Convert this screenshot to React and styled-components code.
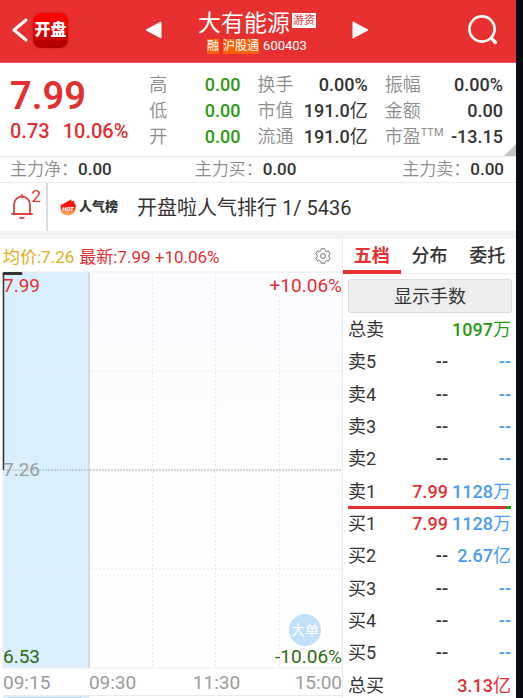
import React from "react";
import styled, { createGlobalStyle } from "styled-components";

const color = {
  brand: "#e93030",
  red: "#e22f31",
  green: "#2b9a12",
  deepGreen: "#2f6b12",
  blue: "#4a9cf5",
  gold: "#e0b020",
  ink: "#333333",
  muted: "#8c8c8c",
  axis: "#9b9b9b",
  line: "#ececec",
};

const GlobalStyle = createGlobalStyle`
  *, *::before, *::after { box-sizing: border-box; }
  html, body { margin: 0; height: 100%; }
  body {
    background: #070b13;
    color: ${color.ink};
    font-family: Roboto, "Noto Sans CJK SC", sans-serif;
    overflow: hidden;
  }
  button { font: inherit; color: inherit; border: 0; padding: 0; background: none; cursor: pointer; }
  a { color: inherit; text-decoration: none; }
  svg { display: block; }
  dl, dt, dd, h1, p { margin: 0; font-weight: inherit; }
`;

const Screen = styled.div`
  height: 100vh;
  margin-right: 7px;
  overflow: hidden;
  background: #fff;
`;

/* ---------- header ---------- */

const Header = styled.header`
  display: grid;
  grid-template-columns: 1fr 224px 1fr;
  align-items: center;
  height: 63px;
  padding: 0 14px 2px 12px;
  background: ${color.brand};
  border-bottom: 1px solid #ee5555;
  color: #fff;
`;

const HeaderSide = styled.div`
  display: flex;
  align-items: center;
  gap: 4px;
  justify-content: ${(p) => (p.$end ? "flex-end" : "flex-start")};
`;

const AppLogo = styled.a`
  display: grid;
  place-items: center;
  width: 35px;
  height: 35px;
  border-radius: 8px;
  background: linear-gradient(#ff0500 0%, #f00000 45%, #b40000 85%);
  box-shadow: 0 0 3px rgba(120, 0, 0, 0.4);
  font-size: 16px;
  line-height: 20px;
  font-weight: 900;
  white-space: nowrap;
`;

const StockNav = styled.nav`
  display: flex;
  align-items: center;
  justify-content: space-between;
`;

const StockTitle = styled.div`
  display: flex;
  flex-direction: column;
  align-items: center;
  padding-top: 4px;
`;

const TitleLine = styled.div`
  display: flex;
  align-items: flex-start;
  gap: 2px;
`;

const StockName = styled.h1`
  font-size: 23px;
  line-height: 28px;
  font-weight: 400;
`;

const StyleTag = styled.span`
  margin-top: 3px;
  padding: 0 1px;
  background: #fff;
  color: ${color.brand};
  font-size: 11px;
  line-height: 15px;
`;

const CodeLine = styled.div`
  display: flex;
  align-items: center;
  gap: 4px;
  font-size: 13px;
  line-height: 16px;
`;

const MarketTag = styled.span`
  background: #fb6306;
  font-size: 12px;
  line-height: 15px;
`;

/* ---------- quote ---------- */

const Quote = styled.section`
  position: relative;
  display: grid;
  grid-template-columns: 122fr 91fr 110fr 118fr;
  column-gap: 17px;
  padding: 9px 13px 6px 10px;
  border-bottom: 1px solid ${color.line};
`;

const PriceBlock = styled.div`
  display: flex;
  flex-direction: column;
  color: ${color.red};
  font-weight: 600;
  white-space: nowrap;
`;

const Price = styled.p`
  padding-top: 3px;
  font-size: 38px;
  line-height: 43px;
`;

const Change = styled.p`
  display: flex;
  gap: 13px;
  font-size: 20px;
  line-height: 26px;
  font-weight: 500;
`;

const Metrics = styled.dl`
  display: flex;
  flex-direction: column;
`;

const Metric = styled.div`
  display: flex;
  justify-content: space-between;
  line-height: 26px;
  white-space: nowrap;
`;

const MetricName = styled.dt`
  display: flex;
  color: ${color.muted};
  font-size: 18px;
  font-weight: 350;
`;

const Suffix = styled.span`
  font-size: 11px;
  line-height: 18px;
  font-weight: 400;
`;

const MetricValue = styled.dd`
  color: ${(p) => (p.$tone ? color[p.$tone] : color.ink)};
  font-size: 18px;
  font-weight: 500;
`;

const Han = styled.span`
  font-weight: 400;
`;

const Corner = styled.svg`
  position: absolute;
  right: 0;
  bottom: 0;
`;

const FlowBar = styled.dl`
  display: grid;
  grid-template-columns: 185fr 208fr auto;
  padding: 0 12px 0 10px;
  border-bottom: 1px solid ${color.line};
`;

const Flow = styled.div`
  display: flex;
  line-height: 25px;
  font-size: 17px;
  white-space: nowrap;
`;

const FlowName = styled.dt`
  color: ${color.muted};
  font-weight: 350;
`;

const FlowValue = styled.dd`
  font-weight: 500;
`;

/* ---------- popularity rank ---------- */

const RankBar = styled.section`
  display: flex;
  align-items: stretch;
  height: 48px;
`;

const AlertButton = styled.button`
  position: relative;
  width: 48px;
  padding-left: 11px;
  border-right: 2px solid #dcdcdc;
  color: ${color.red};
`;

const AlertCount = styled.span`
  position: absolute;
  top: 4px;
  right: 5px;
  font-size: 17px;
  line-height: 18px;
`;

const RankLink = styled.a`
  display: flex;
  flex: 1;
  align-items: center;
  padding-left: 12px;
  font-size: 20px;
  line-height: 28px;
  font-weight: 400;
  white-space: nowrap;
`;

const RankBadge = styled.span`
  display: flex;
  align-items: center;
  gap: 3px;
  margin-right: 19px;
  font-size: 13px;
  line-height: 20px;
  font-weight: 900;
`;

const RankText = styled.span`
  padding-top: 2px;
`;

const Band = styled.div`
  height: 8px;
  background: #f2f2f2;
`;

/* ---------- market area ---------- */

const Market = styled.main`
  display: grid;
  grid-template-columns: 343fr 173fr;
`;

const ChartPanel = styled.section`
  display: flex;
  flex-direction: column;
  padding-left: 3px;
  border-right: 1px solid ${color.line};
`;

const ChartHead = styled.div`
  display: flex;
  align-items: center;
  gap: 5px;
  height: 33px;
  padding-right: 11px;
  font-size: 17px;
  white-space: nowrap;
`;

const Legend = styled.span`
  color: ${(p) => color[p.$tone]};
`;

const GearButton = styled.button`
  margin-left: auto;
`;

const Plot = styled.div`
  position: relative;
  height: 396px;
  background: linear-gradient(#fafbff, #fefefe 50%, #ffffff);
`;

const PlotSvg = styled.svg`
  width: 100%;
  height: 100%;
  overflow: visible;
`;

const AxisLabel = styled.span`
  position: absolute;
  ${(p) => (p.$right ? "right: 0;" : "left: 0;")}
  ${(p) => p.$at === "top" && "top: 3px;"}
  ${(p) => p.$at === "middle" && "top: 50%;"}
  ${(p) => p.$at === "bottom" && "bottom: 0;"}
  ${(p) => p.$at === "middle" && "transform: translateY(-50%);"}
  color: ${(p) => color[p.$tone]};
  font-size: 19px;
  line-height: 22px;
`;

const BigOrder = styled.button`
  && {
    position: absolute;
    right: 21px;
    bottom: 22px;
    width: 32px;
    height: 32px;
    border-radius: 50%;
    background: #bfe0f7;
    color: #fff;
    font-size: 14px;
    line-height: 32px;
    white-space: nowrap;
  }
`;

const TimeAxis = styled.div`
  display: grid;
  grid-template-columns: 86fr 104fr 102fr 47fr;
  height: 27px;
  color: ${color.axis};
  font-size: 19px;
  line-height: 29px;
`;

const VolumePlot = styled.div`
  height: 7px;
  border-top: 1px solid ${color.line};
`;

/* ---------- order book ---------- */

const Book = styled.section`
  display: flex;
  flex-direction: column;
`;

const Tabs = styled.div`
  display: grid;
  grid-template-columns: repeat(3, 1fr);
  height: 35px;
  border-bottom: 1px solid ${color.line};
`;

const Tab = styled.button`
  && {
    height: 35px;
    padding-top: 2px;
    border-bottom: 4px solid ${(p) => (p.$active ? color.brand : "transparent")};
    color: ${(p) => (p.$active ? color.brand : color.ink)};
    font-size: 18px;
    line-height: 29px;
    font-weight: ${(p) => (p.$active ? 700 : 500)};
  }
`;

const LotsButton = styled.button`
  && {
    margin: 5px 4px 1px 5px;
    height: 34px;
    border: 1px solid #dcdcdc;
    border-radius: 3px;
    background: #eeeeee;
    padding-top: 1px;
    font-size: 18px;
    line-height: 31px;
  }
`;

const Ladder = styled.table`
  flex: 1;
  display: flex;
  flex-direction: column;
  padding: 0 5px;
`;

const Side = styled.tbody`
  flex: 1;
  display: flex;
  flex-direction: column;
`;

const Level = styled.tr`
  flex: 1;
  display: grid;
  grid-template-columns: 37fr 63fr 63fr;
  align-items: center;
  font-size: 18px;
  line-height: 24px;
  white-space: nowrap;
`;

const LevelName = styled.th`
  padding: 0;
  font-weight: 400;
  text-align: left;
`;

const LevelCell = styled.td`
  padding: 0;
  color: ${(p) => color[p.$tone]};
  font-weight: 500;
  text-align: right;
`;

const Balance = styled.tbody`
  display: block;
  height: 3px;
  margin: -2px 0 -1px;
  background: linear-gradient(to right, ${color.red} 97%, ${color.green} 97%);
`;

/* ---------- data ---------- */

const metricColumns = [
  [
    { name: "高", value: "0.00", tone: "green" },
    { name: "低", value: "0.00", tone: "green" },
    { name: "开", value: "0.00", tone: "green" },
  ],
  [
    { name: "换手", value: "0.00%" },
    { name: "市值", value: "191.0", unit: "亿" },
    { name: "流通", value: "191.0", unit: "亿" },
  ],
  [
    { name: "振幅", value: "0.00%" },
    { name: "金额", value: "0.00" },
    { name: "市盈", suffix: "TTM", value: "-13.15" },
  ],
];

const flows = [
  ["主力净：", "0.00"],
  ["主力买：", "0.00"],
  ["主力卖：", "0.00"],
];

const sells = [
  { name: "总卖", volume: "1097", unit: "万", volumeTone: "green" },
  { name: "卖5", price: "--", volume: "--" },
  { name: "卖4", price: "--", volume: "--" },
  { name: "卖3", price: "--", volume: "--" },
  { name: "卖2", price: "--", volume: "--" },
  { name: "卖1", price: "7.99", priceTone: "red", volume: "1128", unit: "万" },
];

const buys = [
  { name: "买1", price: "7.99", priceTone: "red", volume: "1128", unit: "万" },
  { name: "买2", price: "--", volume: "2.67", unit: "亿" },
  { name: "买3", price: "--", volume: "--" },
  { name: "买4", price: "--", volume: "--" },
  { name: "买5", price: "--", volume: "--" },
  { name: "总买", volume: "3.13", unit: "亿", volumeTone: "red" },
];

const times = ["09:15", "09:30", "11:30", "15:00"];

/* ---------- icons ---------- */

const BackIcon = () => (
  <svg width="17" height="24" viewBox="0 0 17 24" fill="none" stroke="#fff" strokeWidth="3" strokeLinecap="round" strokeLinejoin="round">
    <path d="M14 2 L2 12 L14 22" />
  </svg>
);

const TriangleIcon = ({ flip }) => (
  <svg width="17" height="18" viewBox="0 0 17 18" fill="#fff" stroke="#fff" strokeWidth="1" strokeLinejoin="round">
    <path d={flip ? "M16 1 V17 L1 9 Z" : "M1 1 V17 L16 9 Z"} />
  </svg>
);

const SearchIcon = () => (
  <svg width="36" height="32" viewBox="0 0 36 32" fill="none" stroke="#fff" strokeWidth="2.6" strokeLinecap="round">
    <circle cx="16" cy="15" r="12.600" />
    <path d="M25.500 24.500 L29.500 28.500" strokeWidth="3.200" />
  </svg>
);

const BellIcon = () => (
  <svg width="22" height="26" viewBox="0 0 22 26" fill="none" stroke="#e04040" strokeWidth="1.8" strokeLinejoin="round" strokeLinecap="round">
    <path d="M11 1 V3" />
    <path d="M1 20 H21" />
    <path d="M3 19.500 V11 C3 6 6.500 2.500 11 2.500 C15.500 2.500 19 6 19 11 V19.500" />
    <path d="M8.500 23.500 H13.500 L12.500 24.500 H9.500 Z" fill="#e04040" strokeWidth="0.800" />
  </svg>
);

const HotIcon = () => (
  <svg width="16" height="17" viewBox="0 0 16 17">
    <defs>
      <linearGradient id="flame" x1="0" y1="0" x2="0" y2="1">
        <stop offset="0.500" stopColor="#fb140c" />
        <stop offset="0.700" stopColor="#fb7a3c" />
        <stop offset="1" stopColor="#fdb266" />
      </linearGradient>
    </defs>
    <path fill="url(#flame)" d="M8 16.500 C3.500 16.500 0.500 13.500 0.500 9.500 C0.500 7.500 1 5.500 2.300 4.300 L2.600 6 C3.500 4 5.500 3.800 7 2.800 C8.300 2 9.800 1.500 11.500 0.300 C11.200 1.500 11.300 2 11.800 2.500 C12.600 2.200 13.200 1.600 13.500 1 C14 2.300 13.700 3.200 14.200 4.500 L15.200 4.200 C15.800 6 15.700 8 15.500 9.500 C15.300 13.500 12.500 16.500 8 16.500 Z" />
    <text x="8" y="11.500" textAnchor="middle" fontFamily="Roboto" fontWeight="900" fontStyle="italic" fontSize="6" fill="#fff">HOT</text>
  </svg>
);

const GearIcon = () => (
  <svg width="16" height="16" viewBox="0 0 16 16" fill="none" stroke="#777" strokeWidth="1" strokeLinejoin="round">
    <path d="M6.300 0.700 H9.700 L10.200 2.700 L11.600 3.500 L13.500 2.900 L15.200 5.800 L13.800 7.200 V8.800 L15.200 10.200 L13.500 13.100 L11.600 12.500 L10.200 13.300 L9.700 15.300 H6.300 L5.800 13.300 L4.400 12.500 L2.500 13.100 L0.800 10.200 L2.200 8.800 V7.200 L0.800 5.800 L2.500 2.900 L4.400 3.500 L5.800 2.700 Z" />
    <circle cx="8" cy="8" r="2.500" />
  </svg>
);

const IconButton = styled.button``;

const Intraday = () => (
  <PlotSvg aria-hidden="true">
    <rect x="0" y="0" width="25.400%" height="100%" fill="#d9effe" />
    <g stroke="#e6e8ea" strokeDasharray="2 2">
      <line x1="0" x2="100%" y1="25%" y2="25%" />
      <line x1="0" x2="100%" y1="75%" y2="75%" />
      <line x1="44.100%" x2="44.100%" y1="0" y2="100%" />
      <line x1="62.700%" x2="62.700%" y1="0" y2="100%" />
      <line x1="81.500%" x2="81.500%" y1="0" y2="100%" />
    </g>
    <line x1="0" x2="100%" y1="50%" y2="50%" stroke="#b0b0b0" strokeDasharray="2 1" />
    <line x1="25.400%" x2="25.400%" y1="0" y2="100%" stroke="#b9c3ca" />
    <rect x="0" y="0" width="100%" height="100%" fill="none" stroke="#ececec" />
    <line x1="0.500" x2="0.500" y1="1" y2="50%" stroke="#333" strokeWidth="1.500" />
    <line x1="1" x2="18" y1="1.500" y2="1.500" stroke="#333" strokeWidth="3" strokeLinecap="round" />
  </PlotSvg>
);

const VolumeStart = () => (
  <svg width="100%" height="6" aria-hidden="true">
    <rect width="25.400%" height="6" fill="#d9effe" />
    <rect x="5" y="1" width="73" height="5" fill="#bcd3e2" />
  </svg>
);

const LevelRow = ({ level }) => (
  <Level>
    <LevelName scope="row">{level.name}</LevelName>
    <LevelCell $tone={level.priceTone || "ink"}>{level.price}</LevelCell>
    <LevelCell $tone={level.volumeTone || "blue"}>
      {level.volume}
      {level.unit && <Han>{level.unit}</Han>}
    </LevelCell>
  </Level>
);

export default function App() {
  return (
    <>
      <GlobalStyle />
      <Screen>
        <Header>
          <HeaderSide>
            <IconButton aria-label="返回"><BackIcon /></IconButton>
            <AppLogo href="#home">开盘</AppLogo>
          </HeaderSide>
          <StockNav>
            <IconButton aria-label="上一只"><TriangleIcon flip /></IconButton>
            <StockTitle>
              <TitleLine>
                <StockName>大有能源</StockName>
                <StyleTag>游资</StyleTag>
              </TitleLine>
              <CodeLine>
                <MarketTag>融</MarketTag>
                <MarketTag>沪股通</MarketTag>
                <span>600403</span>
              </CodeLine>
            </StockTitle>
            <IconButton aria-label="下一只"><TriangleIcon /></IconButton>
          </StockNav>
          <HeaderSide $end>
            <IconButton aria-label="搜索"><SearchIcon /></IconButton>
          </HeaderSide>
        </Header>

        <Quote>
          <PriceBlock>
            <Price>7.99</Price>
            <Change><span>0.73</span><span>10.06%</span></Change>
          </PriceBlock>
          {metricColumns.map((column, i) => (
            <Metrics key={i}>
              {column.map((m) => (
                <Metric key={m.name}>
                  <MetricName>{m.name}{m.suffix && <Suffix>{m.suffix}</Suffix>}</MetricName>
                  <MetricValue $tone={m.tone}>{m.value}{m.unit && <Han>{m.unit}</Han>}</MetricValue>
                </Metric>
              ))}
            </Metrics>
          ))}
          <Corner width="12" height="12" aria-hidden="true"><path d="M12 0 V12 H0 Z" fill="#c4c4c4" /></Corner>
        </Quote>

        <FlowBar>
          {flows.map(([name, value]) => (
            <Flow key={name}>
              <FlowName>{name}</FlowName>
              <FlowValue>{value}</FlowValue>
            </Flow>
          ))}
        </FlowBar>

        <RankBar>
          <AlertButton aria-label="提醒">
            <BellIcon />
            <AlertCount>2</AlertCount>
          </AlertButton>
          <RankLink href="#rank">
            <RankBadge><HotIcon />人气榜</RankBadge>
            <RankText>开盘啦人气排行 1/ 5436</RankText>
          </RankLink>
        </RankBar>
        <Band />

        <Market>
          <ChartPanel>
            <ChartHead>
              <Legend $tone="gold">均价:7.26</Legend>
              <Legend $tone="red">最新:7.99 +10.06%</Legend>
              <GearButton aria-label="设置"><GearIcon /></GearButton>
            </ChartHead>
            <Plot>
              <Intraday />
              <AxisLabel $at="top" $tone="red">7.99</AxisLabel>
              <AxisLabel $at="top" $tone="red" $right>+10.06%</AxisLabel>
              <AxisLabel $at="middle" $tone="axis">7.26</AxisLabel>
              <AxisLabel $at="bottom" $tone="deepGreen">6.53</AxisLabel>
              <AxisLabel $at="bottom" $tone="deepGreen" $right>-10.06%</AxisLabel>
              <BigOrder>大单</BigOrder>
            </Plot>
            <TimeAxis>{times.map((t) => <span key={t}>{t}</span>)}</TimeAxis>
            <VolumePlot><VolumeStart /></VolumePlot>
          </ChartPanel>

          <Book>
            <Tabs role="tablist">
              <Tab role="tab" aria-selected="true" $active>五档</Tab>
              <Tab role="tab" aria-selected="false">分布</Tab>
              <Tab role="tab" aria-selected="false">委托</Tab>
            </Tabs>
            <LotsButton>显示手数</LotsButton>
            <Ladder>
              <Side>{sells.map((l) => <LevelRow key={l.name} level={l} />)}</Side>
              <Balance />
              <Side>{buys.map((l) => <LevelRow key={l.name} level={l} />)}</Side>
            </Ladder>
          </Book>
        </Market>
      </Screen>
    </>
  );
}
